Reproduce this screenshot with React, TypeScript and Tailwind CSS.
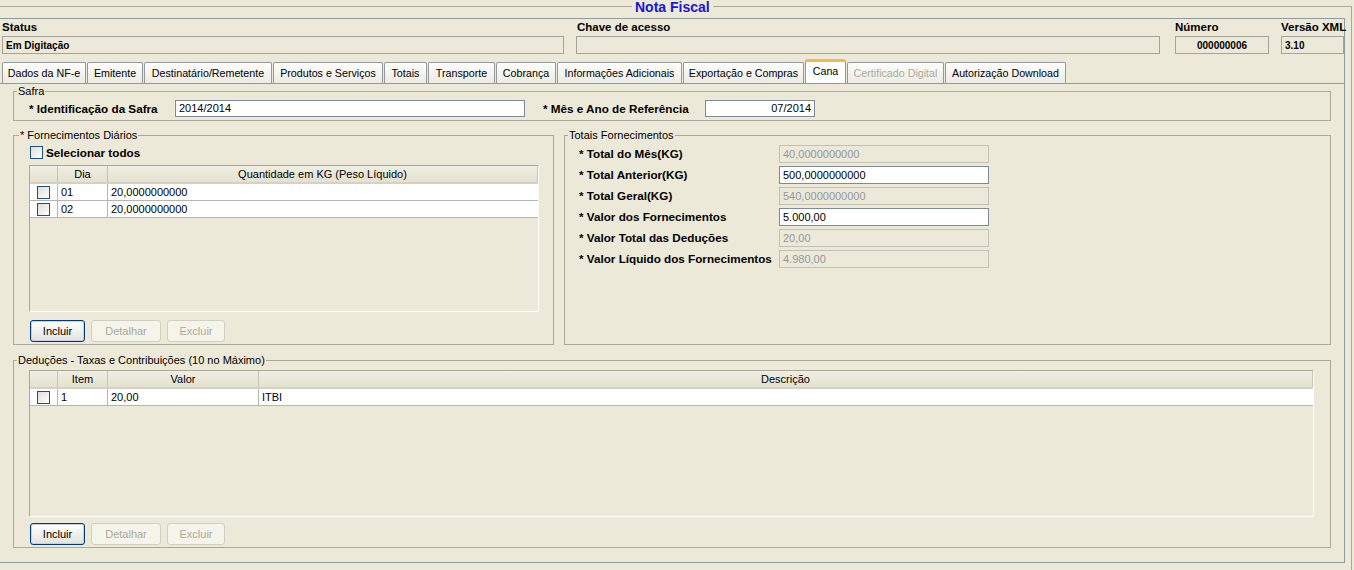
import React from "react";

const Checkbox = () => (
  <div className="w-[13px] h-[13px] border border-[#1c5180] bg-gradient-to-br from-[#dcdcd7] to-white shrink-0" />
);

const Btn = ({ label, w, primary }: { label: string; w: string; primary?: boolean }) =>
  primary ? (
    <div
      className={`${w} h-[22px] rounded-[3px] border border-[#003c74] bg-gradient-to-b from-white to-[#e3e2dc] shadow-[inset_0_0_0_1px_#c2cef3] flex items-center justify-center text-[11px] text-black`}
    >
      {label}
    </div>
  ) : (
    <div
      className={`${w} h-[22px] rounded-[3px] border border-[#d0cfc4] bg-[#f5f4ea] flex items-center justify-center text-[11px] text-[#aca899]`}
    >
      {label}
    </div>
  );

const Legend = ({ text, left }: { text: string; left: string }) => (
  <span className={`absolute top-[-7px] ${left} px-[1px] bg-[#ece9d8] text-[11px] leading-[13px] text-black`}>
    {text}
  </span>
);

const TextIn = ({ value, disabled, w, align }: { value: string; disabled?: boolean; w: string; align?: string }) => (
  <div
    className={`${w} h-[18px] border flex items-center px-[3px] text-[11px] ${
      disabled ? "border-[#c3c1b4] bg-[#ece9d8] text-[#9297a3]" : "border-[#7f8a99] bg-white text-black"
    } ${align === "right" ? "justify-end" : ""}`}
  >
    {value}
  </div>
);

type Col = { w: string; title: string };

const Table = ({
  w,
  h,
  cols,
  rows,
}: {
  w: string;
  h: string;
  cols: Col[];
  rows: string[][];
}) => (
  <div className={`${w} ${h} border border-t-[#aca899] border-l-[#aca899] border-r-white border-b-white flex flex-col`}>
    <div className="flex h-[18px] shrink-0 bg-gradient-to-b from-[#efeee3] to-[#e4e1d0] border-b-[2px] border-[#d6d2c2]">
      {cols.map((c, i) => (
        <div
          key={i}
          className={`${c.w} h-full border-r border-[#c7c5b2] flex items-center justify-center text-[11px] text-black`}
        >
          {c.title}
        </div>
      ))}
    </div>
    {rows.map((r, ri) => (
      <div key={ri} className="flex h-[17px] shrink-0 bg-white border-b border-[#b5b5b5]">
        <div className={`${cols[0].w} h-full border-r border-[#b5b5b5] flex items-center justify-center`}>
          <Checkbox />
        </div>
        {r.map((v, ci) => (
          <div
            key={ci}
            className={`${cols[ci + 1].w} h-full ${ci + 1 < cols.length - 1 ? "border-r border-[#b5b5b5]" : ""} flex items-center pl-[3px] text-[11px] text-black`}
          >
            {v}
          </div>
        ))}
      </div>
    ))}
  </div>
);

const tabs: { t: string; w: string; sel?: boolean; dis?: boolean }[] = [
  { t: "Dados da NF-e", w: "w-[84px]" },
  { t: "Emitente", w: "w-[56px]" },
  { t: "Destinatário/Remetente", w: "w-[128px]" },
  { t: "Produtos e Serviços", w: "w-[110px]" },
  { t: "Totais", w: "w-[43px]" },
  { t: "Transporte", w: "w-[67px]" },
  { t: "Cobrança", w: "w-[60px]" },
  { t: "Informações Adicionais", w: "w-[125px]" },
  { t: "Exportação e Compras", w: "w-[121px]" },
  { t: "Cana", w: "w-[41px]", sel: true },
  { t: "Certificado Digital", w: "w-[97px]", dis: true },
  { t: "Autorização Download", w: "w-[121px]" },
];

const totals: { l: string; v: string; d: boolean }[] = [
  { l: "* Total do Mês(KG)", v: "40,0000000000", d: true },
  { l: "* Total Anterior(KG)", v: "500,0000000000", d: false },
  { l: "* Total Geral(KG)", v: "540,0000000000", d: true },
  { l: "* Valor dos Fornecimentos", v: "5.000,00", d: false },
  { l: "* Valor Total das Deduções", v: "20,00", d: true },
  { l: "* Valor Líquido dos Fornecimentos", v: "4.980,00", d: true },
];

export default function App() {
  return (
    <div className="w-[1354px] h-[570px] overflow-hidden bg-[#ece9d8] font-['Liberation_Sans',Arial,sans-serif] text-[11px] text-black">
      <div className="pt-[6px]">
        <div className="relative ml-[-1px] w-[1353px] h-[600px] border border-[#aca899]">
          <span className="absolute top-[-8px] left-[632px] px-[3px] bg-[#ece9d8] text-[14px] leading-[16px] font-bold text-[#1717d4]">
            Nota Fiscal
          </span>

          <div className="mt-[11px] ml-[-1px] w-[1346px] h-[545px] border border-[#919b9c] flex flex-col">
            {/* Header */}
            <div className="flex pt-[1px] shrink-0">
              <div className="ml-[2px] w-[562px] flex flex-col">
                <div className="h-[14px] leading-[14px] text-[11.5px] font-bold">Status</div>
                <div className="mt-[2px] h-[18px] border border-[#a3a39a] flex items-center px-[3px] text-[10px] font-bold">
                  Em Digitação
                </div>
              </div>
              <div className="ml-[12px] w-[584px] flex flex-col">
                <div className="h-[14px] leading-[14px] text-[11.5px] font-bold pl-[1px]">Chave de acesso</div>
                <div className="mt-[2px] h-[18px] border border-[#a3a39a]" />
              </div>
              <div className="ml-[15px] w-[94px] flex flex-col">
                <div className="h-[14px] leading-[14px] text-[11.5px] font-bold">Número</div>
                <div className="mt-[2px] h-[18px] border border-[#a3a39a] flex items-center justify-center text-[10px] font-bold">
                  000000006
                </div>
              </div>
              <div className="ml-[12px] w-[63px] flex flex-col">
                <div className="h-[14px] leading-[14px] text-[11.5px] font-bold whitespace-nowrap">Versão XML</div>
                <div className="mt-[2px] h-[18px] border border-[#a3a39a] flex items-center px-[3px] text-[10px] font-bold">
                  3.10
                </div>
              </div>
            </div>

            {/* Tabs */}
            <div className="mt-[5px] h-[24px] flex items-end gap-[1px] pl-[2px] shrink-0">
              {tabs.map((t, i) =>
                t.sel ? (
                  <div
                    key={i}
                    className={`${t.w} h-[24px] bg-white border-x border-[#919b9c] border-t-[3px] border-t-[#f5b845] rounded-t-[3px] flex items-center justify-center text-[10.7px] pb-[3px] text-black whitespace-nowrap`}
                  >
                    {t.t}
                  </div>
                ) : (
                  <div
                    key={i}
                    className={`${t.w} h-[21px] border-x border-t border-[#919b9c] rounded-t-[2px] bg-gradient-to-b from-[#fdfdfb] to-[#ecebe5] flex items-center justify-center text-[10.7px] whitespace-nowrap ${
                      t.dis ? "text-[#aca899]" : "text-black"
                    }`}
                  >
                    {t.t}
                  </div>
                )
              )}
            </div>

            {/* Tab panel */}
            <div className="flex-1 border-t border-[#919b9c] px-[13px] flex flex-col">
              {/* Safra */}
              <div className="relative mt-[7px] h-[30px] border border-[#aca899] flex items-center pt-[5px] pl-[15px]">
                <Legend text="Safra" left="left-[3px]" />
                <div className="w-[146px] text-[11.7px] font-bold">* Identificação da Safra</div>
                <div className="w-[350px] h-[17px] border border-[#7f8a99] bg-white flex items-center px-[3px] text-[11px]">
                  2014/2014
                </div>
                <div className="ml-[18px] w-[162px] text-[11.7px] font-bold">* Mês e Ano de Referência</div>
                <div className="w-[110px] h-[17px] border border-[#7f8a99] bg-white flex items-center justify-end px-[3px] text-[11px]">
                  07/2014
                </div>
              </div>

              {/* Fornecimentos row */}
              <div className="mt-[14px] flex gap-[10px]">
                <div className="relative w-[541px] h-[210px] border border-[#aca899] flex flex-col pt-[9px]">
                  <Legend text="* Fornecimentos Diários" left="left-[5px]" />
                  <div className="h-[15px] flex items-center pl-[16px]">
                    <Checkbox />
                    <span className="ml-[3px] text-[11.7px] font-bold">Selecionar todos</span>
                  </div>
                  <div className="mt-[5px] ml-[15px]">
                    <Table
                      w="w-[510px]"
                      h="h-[147px]"
                      cols={[
                        { w: "w-[28px]", title: "" },
                        { w: "w-[50px]", title: "Dia" },
                        { w: "flex-1", title: "Quantidade em KG (Peso Líquido)" },
                      ]}
                      rows={[
                        ["01", "20,0000000000"],
                        ["02", "20,0000000000"],
                      ]}
                    />
                  </div>
                  <div className="mt-[8px] ml-[16px] flex gap-[6px]">
                    <Btn label="Incluir" w="w-[55px]" primary />
                    <Btn label="Detalhar" w="w-[70px]" />
                    <Btn label="Excluir" w="w-[58px]" />
                  </div>
                </div>

                <div className="relative w-[767px] h-[210px] border border-[#aca899] flex flex-col pt-[9px] pl-[14px] gap-[3px]">
                  <Legend text="Totais Fornecimentos" left="left-[3px]" />
                  {totals.map((r, i) => (
                    <div key={i} className="h-[18px] flex items-center">
                      <div className="w-[200px] text-[11.7px] font-bold whitespace-nowrap">{r.l}</div>
                      <TextIn value={r.v} disabled={r.d} w="w-[210px]" />
                    </div>
                  ))}
                </div>
              </div>

              {/* Deduções */}
              <div className="relative mt-[15px] h-[188px] border border-[#aca899] flex flex-col pt-[9px]">
                <Legend text="Deduções - Taxas e Contribuições (10 no Máximo)" left="left-[3px]" />
                <div className="ml-[15px]">
                  <Table
                    w="w-[1285px]"
                    h="h-[147px]"
                    cols={[
                      { w: "w-[28px]", title: "" },
                      { w: "w-[50px]", title: "Item" },
                      { w: "w-[151px]", title: "Valor" },
                      { w: "flex-1", title: "Descrição" },
                    ]}
                    rows={[["1", "20,00", "ITBI"]]}
                  />
                </div>
                <div className="mt-[6px] ml-[16px] flex gap-[6px]">
                  <Btn label="Incluir" w="w-[55px]" primary />
                  <Btn label="Detalhar" w="w-[70px]" />
                  <Btn label="Excluir" w="w-[58px]" />
                </div>
              </div>
            </div>
          </div>
        </div>
      </div>
    </div>
  );
}
